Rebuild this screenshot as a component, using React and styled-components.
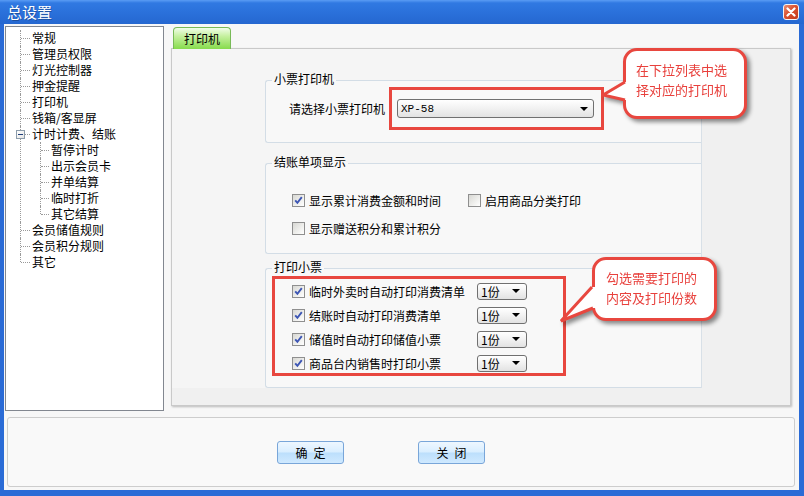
import React from 'react';
import styled, { createGlobalStyle } from 'styled-components';

const GlobalStyle = createGlobalStyle`
  * { box-sizing: border-box; }
  body {
    margin: 0;
    font-family: "Noto Sans CJK SC", "Noto Sans", sans-serif;
    font-size: 12px;
    color: #000;
  }
  ul { margin: 0; padding: 0; list-style: none; }
`;

const StyledWindow = styled.div`
  position: relative;
  width: 804px;
  height: 496px;
  display: flex;
  flex-direction: column;
  background: #2a6bd6;
  overflow: hidden;
`;

const StyledTitleBar = styled.div`
  flex: none;
  height: 24px;
  display: flex;
  align-items: center;
  justify-content: space-between;
  padding: 0 5px 0 7px;
  background: linear-gradient(#5a9cf4 0, #3079e2 3px, #2a70da 55%, #2567d0 100%);
  color: #fff;
  font-size: 15px;
  line-height: 24px;
  text-shadow: 1px 1px 0 rgba(0, 0, 0, 0.25);
`;

const StyledClose = styled.div`
  width: 16px;
  height: 16px;
  border: 1px solid #f4f4f4;
  border-radius: 3px;
  background: linear-gradient(135deg, #eb9176 0%, #d9502f 45%, #c23a1d 100%);
  display: flex;
  align-items: center;
  justify-content: center;
`;

const StyledBody = styled.div`
  flex: 1;
  margin: 0 5px 6px 4px;
  padding: 2px 4px 3px 1px;
  background: #f7f7f7;
  display: flex;
  flex-direction: column;
`;

const StyledMainRow = styled.div`
  display: flex;
  height: 385px;
`;

const StyledTree = styled.div`
  width: 159px;
  height: 100%;
  background: #fff;
  border: 1px solid #828790;
  padding: 3px 0 0 14px;
  line-height: 16px;
`;

const StyledNode = styled.li`
  position: relative;
  padding-left: ${(p) => (p.child ? '11px' : '12px')};

  &::before {
    content: '';
    position: absolute;
    left: 0;
    top: 0;
    height: ${(p) => (p.last ? '8px' : '100%')};
    border-left: 1px dotted #9a9a9a;
  }

  &::after {
    content: '';
    position: absolute;
    left: 1px;
    top: 8px;
    width: ${(p) => (p.child ? '8px' : '9px')};
    border-top: 1px dotted #9a9a9a;
  }
`;

const StyledNodeText = styled.div`
  height: 16px;
  white-space: nowrap;
`;

const StyledChildren = styled.ul`
  margin-left: 8px;
`;

const StyledExpander = styled.span`
  position: absolute;
  left: -4px;
  top: 4px;
  width: 9px;
  height: 9px;
  border: 1px solid #8c9cab;
  background: linear-gradient(135deg, #fff, #e4e4e4);
  z-index: 1;

  &::after {
    content: '';
    position: absolute;
    left: 1px;
    top: 3px;
    width: 5px;
    border-top: 1px solid #1f3f7a;
  }
`;

const StyledTabArea = styled.div`
  width: 620px;
  margin-left: 7px;
  display: flex;
  flex-direction: column;
`;

const StyledTab = styled.div`
  position: relative;
  z-index: 1;
  width: 58px;
  height: 22px;
  margin: 1px 0 -1px 2px;
  border: 1px solid #78ba57;
  border-bottom: none;
  border-radius: 4px 4px 0 0;
  background: linear-gradient(#f1fde8 0%, #c4f09d 40%, #86db4c 100%);
  text-align: center;
  line-height: 21px;
`;

const StyledPane = styled.div`
  height: 358px;
  border: 1px solid #c9c9c9;
  background: #f0f0f0;
  box-shadow: 1px 1px 2px rgba(0, 0, 0, 0.25);
`;

const StyledInner = styled.div`
  width: 530px;
  height: 339px;
  padding: 31px 0 0 93px;
  background: #f5f5f5;
  border-right: 1px solid #d8e0e7;
`;

const StyledGroup = styled.div`
  position: relative;
  height: ${(p) => p.h}px;
  margin-top: ${(p) => p.mt || 0}px;
  border: 1px solid #d3dde6;
  border-right: none;
  border-radius: 3px 0 0 3px;
  background: #f8f8f8;
  padding: ${(p) => p.pad};
`;

const StyledLegend = styled.span`
  position: absolute;
  left: 6px;
  top: -10px;
  padding: 0 2px;
  line-height: 16px;
  background: linear-gradient(#f5f5f5 50%, #f8f8f8 50%);
`;

const StyledPrinterRow = styled.div`
  display: flex;
  align-items: center;
  gap: 4px;
`;

const StyledLabel = styled.span`
  width: 96px;
  white-space: nowrap;
`;

const StyledHighlight = styled.div`
  border: 3px solid #e8473f;
  padding: ${(p) => p.pad};
  margin: ${(p) => p.m || 0};
  width: ${(p) => (p.w ? `${p.w}px` : 'auto')};
  height: ${(p) => (p.h ? `${p.h}px` : 'auto')};
`;

const StyledCombo = styled.div`
  position: relative;
  width: ${(p) => p.w}px;
  height: ${(p) => p.h}px;
  border: 1px solid #707070;
  border-radius: 3px;
  background: linear-gradient(#ffffff 0%, #f3f3f3 45%, #e2e2e2 100%);
  display: flex;
  align-items: center;
  padding-left: 3px;
  font-family: ${(p) => (p.mono ? '"Liberation Mono", monospace' : 'inherit')};
  font-size: ${(p) => (p.mono ? '11px' : '12px')};

  &::after {
    content: '';
    position: absolute;
    right: ${(p) => (p.mono ? '5px' : '6px')};
    top: 50%;
    margin-top: -2px;
    border-left: 4px solid transparent;
    border-right: 4px solid transparent;
    border-top: 4px solid #000;
  }
`;

const StyledCheckGrid = styled.div`
  display: grid;
  grid-template-columns: ${(p) => p.cols};
  column-gap: ${(p) => p.cg || 0}px;
  row-gap: ${(p) => p.rg}px;
  align-items: center;
`;

const StyledCheckItem = styled.label`
  display: flex;
  align-items: center;
  gap: 4px;
  height: 18px;
  white-space: nowrap;
`;

const StyledBox = styled.span`
  flex: none;
  width: 13px;
  height: 13px;
  border: 1px solid #8f8f8f;
  background: linear-gradient(135deg, #d8d8d4 0%, #f4f4f2 70%, #fff 100%);
  display: flex;
  align-items: center;
  justify-content: center;
`;

const StyledBottom = styled.div`
  height: 70px;
  margin: 6px 0 0 2px;
  border: 1px solid #cdcdcd;
  border-radius: 3px;
  background: #f9f9f9;
  display: flex;
  gap: 74px;
  padding: 23px 0 0 269px;
`;

const StyledButton = styled.button`
  width: 67px;
  height: 23px;
  border: 1px solid #79a6d9;
  border-radius: 3px;
  background: linear-gradient(#eef7ff 0%, #d9eeff 48%, #bcdffc 52%, #cfe9ff 100%);
  font-family: inherit;
  font-size: 12px;
  color: #000;
  padding: 0;
  letter-spacing: 6px;
  text-indent: 6px;
`;

const StyledCallout = styled.div`
  position: absolute;
  left: ${(p) => p.x}px;
  top: ${(p) => p.y}px;
  width: ${(p) => p.w}px;
  height: ${(p) => p.h}px;
  filter: drop-shadow(3px 3px 2px rgba(0, 0, 0, 0.45));
  z-index: 5;
`;

const StyledBubble = styled.div`
  width: 100%;
  height: 100%;
  border: 3px solid #e8473f;
  border-radius: 14px;
  background: #fff;
  color: #e8403c;
  font-size: 13px;
  line-height: 20px;
  padding: ${(p) => p.pad};
  white-space: nowrap;
`;

const StyledTail = styled.svg`
  position: absolute;
  left: ${(p) => p.x}px;
  top: ${(p) => p.y}px;
`;

const Check = ({ on }) => (
  <StyledBox>
    {on && (
      <svg width="9" height="9" viewBox="0 0 9 9">
        <path d="M1.2 4.3 L3.4 6.8 L7.8 1.2" fill="none" stroke="#3d56b4" strokeWidth="1.9" />
      </svg>
    )}
  </StyledBox>
);

const CheckItem = ({ on, children }) => (
  <StyledCheckItem>
    <Check on={on} />
    <span>{children}</span>
  </StyledCheckItem>
);

const treeTop = ['常规', '管理员权限', '灯光控制器', '押金提醒', '打印机', '钱箱/客显屏'];
const treeChildren = ['暂停计时', '出示会员卡', '并单结算', '临时打折', '其它结算'];
const treeBottom = ['会员储值规则', '会员积分规则', '其它'];

const ticketRows = ['临时外卖时自动打印消费清单', '结账时自动打印消费清单', '储值时自动打印储值小票', '商品台内销售时打印小票'];

const App = () => {
  return (
    <StyledWindow>
      <GlobalStyle />
      <StyledTitleBar>
        <span>总设置</span>
        <StyledClose>
          <svg width="10" height="10" viewBox="0 0 10 10">
            <path d="M1.5 1.5 L8.5 8.5 M8.5 1.5 L1.5 8.5" stroke="#fff" strokeWidth="2.2" strokeLinecap="round" />
          </svg>
        </StyledClose>
      </StyledTitleBar>

      <StyledBody>
        <StyledMainRow>
          <StyledTree>
            <ul>
              {treeTop.map((t) => (
                <StyledNode key={t}>
                  <StyledNodeText>{t}</StyledNodeText>
                </StyledNode>
              ))}
              <StyledNode>
                <StyledExpander />
                <StyledNodeText>计时计费、结账</StyledNodeText>
                <StyledChildren>
                  {treeChildren.map((t, i) => (
                    <StyledNode key={t} child last={i === treeChildren.length - 1}>
                      <StyledNodeText>{t}</StyledNodeText>
                    </StyledNode>
                  ))}
                </StyledChildren>
              </StyledNode>
              {treeBottom.map((t, i) => (
                <StyledNode key={t} last={i === treeBottom.length - 1}>
                  <StyledNodeText>{t}</StyledNodeText>
                </StyledNode>
              ))}
            </ul>
          </StyledTree>

          <StyledTabArea>
            <StyledTab>打印机</StyledTab>
            <StyledPane>
              <StyledInner>
                <StyledGroup h={63} pad="6px 0 0 23px">
                  <StyledLegend>小票打印机</StyledLegend>
                  <StyledPrinterRow>
                    <StyledLabel>请选择小票打印机</StyledLabel>
                    <StyledHighlight pad="9px 7px 9px 5px">
                      <StyledCombo w={197} h={19} mono>
                        XP-58
                      </StyledCombo>
                    </StyledHighlight>
                  </StyledPrinterRow>
                </StyledGroup>

                <StyledGroup h={91} mt={20} pad="27px 0 0 26px">
                  <StyledLegend>结账单项显示</StyledLegend>
                  <StyledCheckGrid cols="176px auto" rg={10}>
                    <CheckItem on>显示累计消费金额和时间</CheckItem>
                    <CheckItem>启用商品分类打印</CheckItem>
                    <CheckItem>显示赠送积分和累计积分</CheckItem>
                  </StyledCheckGrid>
                </StyledGroup>

                <StyledGroup h={120} mt={14} pad="7px 0 0 6px">
                  <StyledLegend>打印小票</StyledLegend>
                  <StyledHighlight w={294} h={100} pad="3px 0 0 17px">
                    <StyledCheckGrid cols="181px 50px" cg={4} rg={6}>
                      {ticketRows.map((t) => (
                        <React.Fragment key={t}>
                          <CheckItem on>{t}</CheckItem>
                          <StyledCombo w={50} h={17}>
                            1份
                          </StyledCombo>
                        </React.Fragment>
                      ))}
                    </StyledCheckGrid>
                  </StyledHighlight>
                </StyledGroup>
              </StyledInner>
            </StyledPane>
          </StyledTabArea>
        </StyledMainRow>

        <StyledBottom>
          <StyledButton>确定</StyledButton>
          <StyledButton>关闭</StyledButton>
        </StyledBottom>
      </StyledBody>

      <StyledCallout x={623} y={48} w={124} h={71}>
        <StyledBubble pad="9px 0 0 10px">
          在下拉列表中选
          <br />
          择对应的打印机
        </StyledBubble>
        <StyledTail x={-22} y={30} width="30" height="26" viewBox="0 0 30 26">
          <polygon points="2,17 24,4 28,4 28,22 24,22" fill="#fff" />
          <polyline points="24,4 2,17 24,22" fill="none" stroke="#e8473f" strokeWidth="3" strokeLinejoin="miter" />
        </StyledTail>
      </StyledCallout>

      <StyledCallout x={592} y={257} w={125} h={64}>
        <StyledBubble pad="8px 0 0 11px">
          勾选需要打印的
          <br />
          内容及打印份数
        </StyledBubble>
        <StyledTail x={-33} y={26} width="40" height="42" viewBox="0 0 40 42">
          <polygon points="2,38 33,4 38,4 38,25 34,25" fill="#fff" />
          <polyline points="33,4 2,38 34,25" fill="none" stroke="#e8473f" strokeWidth="3" strokeLinejoin="miter" />
        </StyledTail>
      </StyledCallout>
    </StyledWindow>
  );
};

export default App;
